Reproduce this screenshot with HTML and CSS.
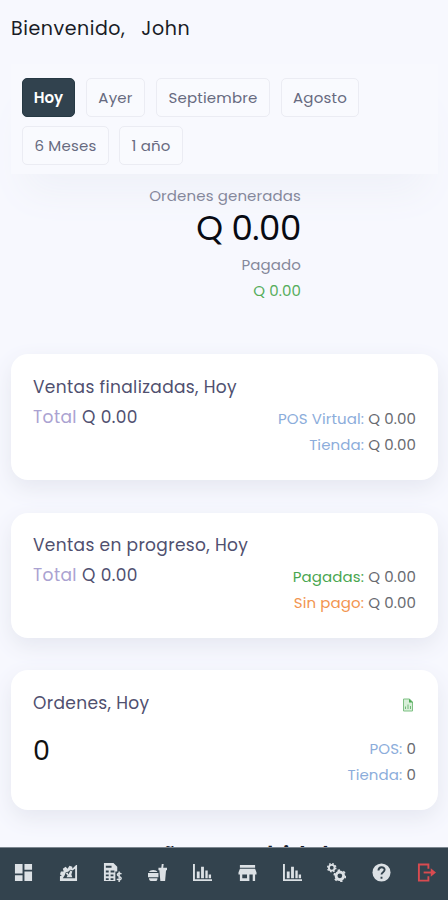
FILE: index.html
```html
<!DOCTYPE html>
<html lang="es">
<head>
    <meta charset="UTF-8">
    <meta name="viewport" content="width=device-width, initial-scale=1.0">
    <title>Inicio</title>
    <link rel="stylesheet" href="styles.css">
</head>
<body>
    <main class="container">
        <h1 class="welcome"><span>Bienvenido,</span><span class="user">John</span></h1>

        <div class="filters">
            <button class="active">Hoy</button>
            <button class="ayer">Ayer</button>
            <button class="septiembre">Septiembre</button>
            <button class="agosto">Agosto</button>
            <button class="meses">6 Meses</button>
            <button class="anio">1 año</button>
        </div>

        <section class="totals">
            <div class="label">Ordenes generadas</div>
            <div class="amount">Q 0.00</div>
            <div class="label paid-label">Pagado</div>
            <div class="paid">Q 0.00</div>
        </section>

        <section class="card">
            <h2>Ventas finalizadas, Hoy</h2>
            <div class="row">
                <div class="total"><span>Total</span> Q 0.00</div>
                <div class="details">
                    <div><span class="blue">POS Virtual:</span> Q 0.00</div>
                    <div><span class="blue">Tienda:</span> Q 0.00</div>
                </div>
            </div>
        </section>

        <section class="card progress">
            <h2>Ventas en progreso, Hoy</h2>
            <div class="row">
                <div class="total"><span>Total</span> Q 0.00</div>
                <div class="details">
                    <div><span class="green">Pagadas:</span> Q 0.00</div>
                    <div><span class="orange">Sin pago:</span> Q 0.00</div>
                </div>
            </div>
        </section>

        <section class="card orders">
            <div class="card-head">
                <h2>Ordenes, Hoy</h2>
                <svg class="file" viewBox="0 0 12 14"><path d="M1.5 1h6l3 3v9h-9z" fill="#d8efd9" stroke="#7fc184"/><path d="M7 .8V4.500h4z" fill="#4da954"/><path d="M3.500 11V8.500M6 11V6.500M8.500 11V8" stroke="#72b978"/></svg>
            </div>
            <div class="row">
                <div class="count">0</div>
                <div class="details">
                    <div><span class="blue">POS:</span> 0</div>
                    <div><span class="blue">Tienda:</span> 0</div>
                </div>
            </div>
        </section>

        <h2 class="next">Señores Kubidal</h2>
    </main>

    <nav class="bottom-nav">
        <a><svg viewBox="0 0 20 20"><path d="M1 1h8v10H1zM11 1h8v6h-8zM1 13h8v6H1zM11 9h8v10h-8z"/></svg></a>
        <a><svg viewBox="0 0 20 20"><path fill-rule="evenodd" d="M1 19v-5l2-1-2-1 1-3h3l-1-3 3-2 2 2 2-3 3 1v2l4-4h1v17zM4 16h13V6l-3 2-2-1-2 2-3 1-1 3z"/><path d="M8 15l1-2-2-2 2-1 1 2 2-4 2 1-1 3 1 3z"/></svg></a>
        <a><svg viewBox="0 0 20 20"><path fill-rule="evenodd" d="M1 0h10l4 4v5h-2v10H1zM3 3v2h6V3zM3 8v2h3V8zM8 8v2h4V8zM3 12v2h3v-2zM8 12v2h3v-2zM3 16v2h3v-2zM8 16v2h3v-2z"/><path class="line" d="M19.500 11.500c-4-2-6 1-2.500 2.500s2.500 5-2.500 3M17 9v11"/></svg></a>
        <a><svg viewBox="0 0 20 20"><path d="M1 9.500c1-3 8-3 9 0zM0 10.500h11V15H0zM1 16h9c0 2-1 3-2 3H3c-1 0-2-1.500-2-3zM11 5h3l.5-4h2L16 5h4v2.500h-1L18 19h-5l-1-11.500h-1z"/></svg></a>
        <a><svg viewBox="0 0 20 20"><path d="M0 1h2v16h18v2H0zM4 9h3v7H4zM8.500 4h3v12h-3zM13 8h2.500v8H13zM16.500 12H19v4h-2.500z"/></svg></a>
        <a><svg viewBox="0 0 20 20"><path d="M2 2h16v3H2zM2 6h16l1.500 4v2H18v7h-2.500v-7H12v7H2v-7H.5v-2zM4.500 12v4h5v-4z" fill-rule="evenodd"/></svg></a>
        <a><svg viewBox="0 0 20 20"><path d="M0 1h2v16h18v2H0zM4 9h3v7H4zM8.500 4h3v12h-3zM13 8h2.500v8H13zM16.500 12H19v4h-2.500z"/></svg></a>
        <a><svg viewBox="0 0 20 20"><circle class="gear" cx="5" cy="5" r="3"/><circle class="teeth" cx="5" cy="5" r="4.300"/><circle class="gear big" cx="13.500" cy="13.500" r="4"/><circle class="teeth large" cx="13.500" cy="13.500" r="5.900"/></svg></a>
        <a><svg viewBox="0 0 20 20"><circle cx="10" cy="10" r="9.500"/><path class="mark" d="M6.800 8c0-4.500 6.500-4.500 6.500-.8 0 2.500-3.300 2.500-3.300 5M10 14.500v2"/></svg></a>
        <a class="logout"><svg viewBox="0 0 20 20"><path d="M12 6V1.500H2v17h10V14"/><path d="M7 10h9"/><path class="arrow" d="M14.500 5.500 20 10l-5.500 4.500z"/></svg></a>
    </nav>
</body>
</html>
```
FILE: styles.css
```css
* {
    box-sizing: border-box;
}
body {
    margin: 0;
    height: 900px;
    overflow: hidden;
    background-color: #f7f8fe;
    font-family: Poppins, Inter, sans-serif;
    color: #515365;
}
.container {
    height: 900px;
    overflow: hidden;
    padding: 0 10px 0 11px;
}
h1, h2 {
    margin: 0;
    font-weight: 400;
}
.welcome {
    height: 64px;
    padding-top: 14px;
    font-size: 19px;
    line-height: 30px;
    letter-spacing: 0.55px;
    color: #191c26;
}
.user {
    margin-left: 16px;
}
.filters {
    display: flex;
    flex-wrap: wrap;
    align-content: flex-start;
    gap: 9px 11px;
    height: 110px;
    padding: 14px 11px 0;
    background-color: #f8f9fe;
    box-shadow: 0 32px 38px -14px #eff1f8;
}
button {
    height: 39px;
    padding: 0;
    border: 1px solid #ebecf3;
    border-radius: 5px;
    background-color: #f9fafe;
    color: #676a80;
    font-family: inherit;
    font-size: 15px;
    letter-spacing: 0.2px;
}
.active {
    width: 53px;
    border-color: #263944;
    background-color: #31424e;
    color: #fff;
    font-weight: 600;
    letter-spacing: 0;
}
.ayer {
    width: 59px;
}
.septiembre {
    width: 114px;
}
.agosto {
    width: 78px;
}
.meses {
    width: 87px;
}
.anio {
    width: 64px;
    margin-left: -1px;
}
.totals {
    width: 290px;
    height: 180px;
    padding-top: 9px;
    text-align: right;
}
.label {
    font-size: 15px;
    line-height: 26px;
    letter-spacing: 0.12px;
    color: #85889b;
}
.amount {
    font-size: 34px;
    line-height: 38px;
    letter-spacing: -0.4px;
    color: #080a12;
}
.paid-label {
    margin-top: 5px;
}
.paid {
    font-size: 15px;
    line-height: 26px;
    letter-spacing: 0.1px;
    color: #55ad5b;
}
.card {
    height: 126px;
    margin-bottom: 33px;
    padding: 20px 22px 0;
    border-radius: 17px;
    background-color: #fff;
    box-shadow: 0 8px 22px #e5e7f0;
}
.card h2 {
    font-size: 17px;
    line-height: 26px;
    letter-spacing: 0.36px;
    color: #50506f;
}
.row {
    display: flex;
    justify-content: space-between;
}
.total {
    padding-top: 4px;
    font-size: 17px;
    line-height: 26px;
    letter-spacing: 0.4px;
    color: #505070;
}
.total span {
    color: #aaa2d1;
}
.details {
    padding-top: 6px;
    font-size: 15px;
    line-height: 26px;
    letter-spacing: 0.1px;
    text-align: right;
    color: #686a70;
}
.blue {
    color: #8caddb;
}
.green {
    color: #4aa64f;
}
.orange {
    color: #f29550;
}
.progress {
    height: 125px;
    margin-bottom: 32px;
    padding-top: 19px;
}
.orders {
    height: 140px;
}
.card-head {
    display: flex;
    justify-content: space-between;
    align-items: center;
}
.file {
    width: 12px;
    height: 14px;
    margin: 3px 2px 0 0;
}
.count {
    padding-top: 16px;
    font-size: 27px;
    line-height: 38px;
    color: #111;
}
.orders .details {
    padding-top: 20px;
}
.next {
    margin-top: -3px;
    padding-left: 12px;
    text-align: center;
    font-size: 23px;
    line-height: 30px;
    letter-spacing: 0.5px;
    font-weight: 600;
    color: #151b2c;
}
.bottom-nav {
    position: fixed;
    left: 0;
    right: 0;
    bottom: 0;
    display: flex;
    height: 53px;
    border-top: 1px solid #7d8790;
    background-color: #33434e;
}
.bottom-nav a {
    display: flex;
    flex: 1;
    align-items: center;
    justify-content: center;
    padding: 0 0 3px 2px;
}
.bottom-nav svg {
    width: 19px;
    height: 19px;
    fill: #dce1e5;
}
.bottom-nav .line {
    fill: none;
    stroke: #dce1e5;
    stroke-width: 1.5;
}
.gear, .teeth {
    fill: none;
    stroke: #dce1e5;
    stroke-width: 2;
}
.big {
    stroke-width: 3;
}
.teeth {
    stroke-width: 1.5;
    stroke-dasharray: 1.7 1.677;
}
.large {
    stroke-width: 1.8;
    stroke-dasharray: 2.5 3.678;
}
.mark {
    fill: none;
    stroke: #33434e;
    stroke-width: 2;
}
.logout path {
    fill: none;
    stroke: #d94b50;
    stroke-width: 2;
}
.logout .arrow {
    fill: #d94b50;
    stroke: none;
}
```
